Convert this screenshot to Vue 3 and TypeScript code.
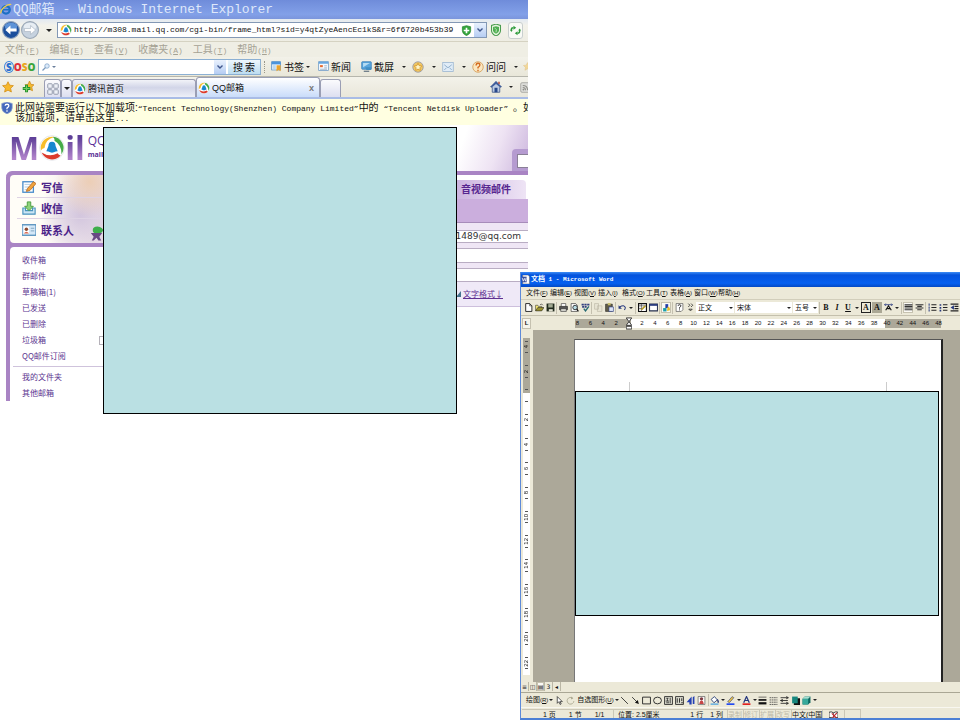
<script setup lang="ts">
import { ref } from 'vue'

interface Entry { label: string; key: string }
interface Tool { icon?: string; text?: string; kind?: 'sep' | 'drop' | 'glyph'; cls?: string; name?: string }

const address = ref('http://m308.mail.qq.com/cgi-bin/frame_html?sid=y4qtZyeAencEc1kS&r=6f6720b453b39')
const query = ref('')
const sender = ref('11489@qq.com')

const browserMenu: Entry[] = [
  { label: '文件', key: 'F' }, { label: '编辑', key: 'E' }, { label: '查看', key: 'V' },
  { label: '收藏夹', key: 'A' }, { label: '工具', key: 'T' }, { label: '帮助', key: 'H' },
]
const wordMenu: Entry[] = [
  { label: '文件', key: 'F' }, { label: '编辑', key: 'E' }, { label: '视图', key: 'V' },
  { label: '插入', key: 'I' }, { label: '格式', key: 'O' }, { label: '工具', key: 'T' },
  { label: '表格', key: 'A' }, { label: '窗口', key: 'W' }, { label: '帮助', key: 'H' },
]
const mainLinks = [
  { icon: 'write', label: '写信' }, { icon: 'inbox', label: '收信' }, { icon: 'card', label: '联系人' },
]
const folders = ['收件箱', '群邮件', '草稿箱(1)', '已发送', '已删除', '垃圾箱', 'QQ邮件订阅']
const extraFolders = ['我的文件夹', '其他邮箱']

const icons: Record<string, string> = {
  ie: '<ellipse cx="8" cy="9" rx="5" ry="5" fill="none" stroke="#1c6fc4" stroke-width="3"/><path d="M4 9h9" stroke="#1c6fc4" stroke-width="2"/><path d="M1 14C0 9 9 1 15 2" fill="none" stroke="#f2cf4a" stroke-width="1.6"/>',
  qq: '<circle cx="8" cy="8" r="7.600" fill="#fff" stroke="#d8dce2" stroke-width=".4"/><path d="M1.200 9.500A7 7 0 0 1 9.500 1.200Q4 2.500 3.400 8Q2 8.300 1.200 9.500Z" fill="#f6bd2a"/><path d="M8.500 1A7 7 0 0 1 13.800 12Q14 6 9.500 3.500Q9.800 2 8.500 1Z" fill="#45ab48"/><path d="M13.300 12.600A7 7 0 0 1 1.600 10.800Q6.500 14 11.500 11.300Q12 12.600 13.300 12.600Z" fill="#dc3b2c"/><path d="M8 4.200q2.200 0 2.200 2.600l1.300 3.200-1.200.2q-2.300 1.400-4.600 0L4.500 10l1.300-3.200Q5.800 4.200 8 4.200Z" fill="#1787cf"/>',
  back: '<circle cx="8" cy="8" r="7.500" fill="#1c4f9c" stroke="#93a5bd"/><ellipse cx="8" cy="5" rx="5.500" ry="3.500" fill="#5d93d8"/><path d="M3 8l4.500-4v2.700H13v2.600H7.500V12Z" fill="#fff"/>',
  forward: '<circle cx="8" cy="8" r="7.500" fill="#c6d2df" stroke="#9aa7b6"/><ellipse cx="8" cy="5" rx="5.500" ry="3.500" fill="#e7edf3"/><path d="M13 8L8.500 4v2.700H3v2.600h5.500V12Z" fill="#fff" stroke="#a7b3c1" stroke-width=".6"/>',
  plusShield: '<path d="M8 1l6 1.500v6Q14 13 8 15.500Q2 13 2 8.500v-6Z" fill="#34a53c" stroke="#23822d"/><path d="M8 4v8M4 8h8" stroke="#fff" stroke-width="2.400"/>',
  shield: '<path d="M8 0l6 2v6.500Q14 13 8 16Q2 13 2 8.500V2Z" fill="#e6f4df" stroke="#4a9c4f" stroke-width="1.400"/><path d="M8 3l4 1v4.500Q12 11 8 13Q4 11 4 8.500V4Z" fill="#4fae52"/><path d="M6 5q4 2 2 6" stroke="#d9f1d4" fill="none"/>',
  refresh: '<path d="M2 8V6q0-2 3-2M11 12q3 0 3-3V7" fill="none" stroke="#2e9b3b" stroke-width="2"/><path d="M5 1l4 3-4 3ZM11 9l-4 3 4 3ZM0 7h4L2 10ZM12 8h4L14 5Z" fill="#2e9b3b"/>',
  star: '<path d="M8 1l2.200 4.600 5 .6-3.700 3.500 1 5L8 12.200 3.500 14.700l1-5L.8 6.200l5-.6Z" fill="#f7b92b" stroke="#d38b12"/>',
  addStar: '<path d="M10 0l2 4.500 4 .5-3 3 1 5-4-2-4 2 1-5-3-3 4-.5Z" fill="#f5b92e" stroke="#cb8a1b"/><path d="M6 5v10M1 10h10" stroke="#23912c" stroke-width="4"/><path d="M6 6v8M2 10h8" stroke="#74cf62" stroke-width="1.600"/>',
  tiles: '<g fill="#edf0f6" stroke="#9198aa" stroke-width="1.300"><rect x="1" y="1" width="6" height="6" rx="1"/><rect x="9" y="1" width="6" height="6" rx="1"/><rect x="1" y="9" width="6" height="6" rx="1"/><rect x="9" y="9" width="6" height="6" rx="1"/></g>',
  bookmark: '<rect x="1" y="1" width="13" height="12" fill="#fff" stroke="#4580bd"/><path d="M1 1h13v4H1Z" fill="#4b94dc"/><path d="M2 6h5v6H2Z" fill="#bdd9f1"/><path d="M8 6h6v9l-3-2-3 2Z" fill="#eba32b"/>',
  news: '<rect x="1" y="1" width="14" height="13" fill="#f5f9fe" stroke="#5d8fbf"/><path d="M1 1h14v3H1Z" fill="#67a7e0"/><path d="M3 6h4v3H3Z" fill="#e5682c"/><path d="M9 7h4M9 10h4M3 12h10" stroke="#8199b1"/>',
  shot: '<rect x="1" y="1" width="14" height="11" rx="1" fill="#58a5dc" stroke="#3279b5"/><path d="M3 3h10L3 9Z" fill="#b5dcf3"/><path d="M6 9h9v4H8Z" fill="#408fc5"/><path d="M4 15h8" stroke="#73818c" stroke-width="2"/>',
  badge: '<circle cx="8" cy="8" r="7" fill="#efc665" stroke="#8f93a8"/><path d="M8 3l1.500 3.200 3.500.4-2.500 2.500.6 3.400L8 10.800 4.900 12.500l.6-3.400L3 6.600l3.500-.4Z" fill="#fff5c7" stroke="#d39320"/>',
  mail: '<rect x="1" y="2" width="14" height="12" fill="#e0ecf7" stroke="#97b3cf"/><path d="M3 5l5 4 5-4M3 12l3-3M13 12l-3-3" fill="none" stroke="#7b9dbf"/>',
  ask: '<circle cx="8" cy="8" r="7" fill="#fae7c0" stroke="#d1954b"/><path d="M5.500 6q0-3 2.500-3t2.500 2.300Q10.500 7 8 8.500V10M8 11.500v2" fill="none" stroke="#d46b21" stroke-width="1.800"/>',
  home: '<path d="M1 8l7-7 7 7-2 .5V15H3V8.500Z" fill="#bccbe3" stroke="#334d80"/><path d="M0 8l8-8 8 8H13L8 4 3 8Z" fill="#405e9c"/><path d="M6 9h4v6H6Z" fill="#28488c"/><path d="M11 1h2v3h-2Z" fill="#b44b3d"/>',
  rss: '<rect x="1" y="1" width="14" height="14" rx="2" fill="#dcdcd8" stroke="#969692"/><path d="M4 5q7 0 7 7M4 8q4 0 4 4" fill="none" stroke="#8e8e89" stroke-width="1.500"/><circle cx="5" cy="11" r="1.300" fill="#8e8e89"/>',
  info: '<path d="M8 0l7 2v6q0 5-7 8Q1 13 1 8V2Z" fill="#4468bb" stroke="#93a5cf"/><path d="M5.500 5q0-2 2.500-2t2.500 2q0 1.500-2.500 3v1.500M8 11v2" fill="none" stroke="#fff" stroke-width="1.700"/>',
  lens: '<circle cx="10" cy="6" r="4.500" fill="#dceaf9" stroke="#7da1c8" stroke-width="1.500"/><path d="M7 9l-6 6" stroke="#7c9abd" stroke-width="2.500"/>',
  chevron: '<path d="M3 5l5 5 5-5" fill="none" stroke="#3f568c" stroke-width="2.800"/>',
  write: '<rect x="1" y="2" width="12" height="12" fill="#fff" stroke="#4b8dcb" stroke-width="1.500"/><path d="M3 5h7M3 8h5M3 11h4" stroke="#a8c7df"/><path d="M6 10l7-8 3 2-7 8-4 1Z" fill="#f1a33a" stroke="#b86d28"/>',
  inbox: '<path d="M1 8v7h14V8h-3v3H4V8Z" fill="#cbe5f4" stroke="#4a93bd" stroke-width="1.300"/><path d="M6 1h4v5h3l-5 5-5-5h3Z" fill="#8ed37b" stroke="#43983a"/>',
  card: '<rect x="0" y="2" width="16" height="12" fill="#d4e8f7" stroke="#4384b5" stroke-width="1.300"/><rect x="2" y="4" width="6" height="8" fill="#fff"/><circle cx="5" cy="7" r="2" fill="#8d4b31"/><path d="M2 12q3-4 6 0Z" fill="#dc6a50"/><path d="M10 6h4M10 9h4" stroke="#799fb9"/>',
  wdoc: '<path d="M3 0h10l2 3v13H3Z" fill="#fff" stroke="#666"/><path d="M1 3h9v10H1Z" fill="#354e9d"/><path d="M2 5l2 6 2-5 2 5 1-6" fill="none" stroke="#fff" stroke-width="1.300"/>',
  newdoc: '<path d="M3 1h7l4 4v10H3Z" fill="#fff" stroke="#111" stroke-width="1.500"/><path d="M10 1v4h4" fill="none" stroke="#111"/>',
  open: '<path d="M1 14V4h4l1 2h6v3" fill="#f6e875" stroke="#333"/><path d="M1 14l4-6h11l-4 6Z" fill="#9b9330" stroke="#222"/><path d="M9 3q3-3 5 1" fill="none" stroke="#111"/>',
  save: '<path d="M1 1h14v14H1Z" fill="#202a1c"/><path d="M4 2h8v6H4Z" fill="#a2aa92"/><path d="M5 11h7v4H5Z" fill="#e0e0d0"/>',
  print: '<path d="M4 6V1h8v5" fill="#fff" stroke="#222"/><path d="M1 6h14v6H1Z" fill="#555" stroke="#111"/><path d="M3 10h10v5H3Z" fill="#d5d5ce" stroke="#222"/>',
  preview: '<path d="M2 1h8l3 3v11H2Z" fill="#fff" stroke="#111"/><circle cx="9" cy="8" r="4" fill="#b8dbe4" stroke="#222" stroke-width="1.500"/><path d="M12 11l3 4" stroke="#111" stroke-width="2"/>',
  spell: '<path d="M1 3h14M2 7h8" stroke="#334080" stroke-width="3" stroke-dasharray="4 1"/><path d="M5 10l3 4 6-8" fill="none" stroke="#276a72" stroke-width="2.500"/>',
  copy: '<path d="M1 1h7v10H1ZM6 5h8v10H6Z" fill="#e8e5d5" stroke="#b5b19e"/>',
  paste: '<path d="M1 2h12v13H1Z" fill="#605b48" stroke="#222"/><path d="M5 0h5v4H5Z" fill="#c7bd6d"/><path d="M7 7h8v8H7Z" fill="#dce4f5" stroke="#20337e"/>',
  undo: '<path d="M3 7q8-5 10 1 0 3-2 4" fill="none" stroke="#26387e" stroke-width="1.800"/><path d="M1 4v6h6Z" fill="#26387e"/>',
  table: '<path d="M1 1h14v14H1Z" fill="#fff" stroke="#111" stroke-width="2"/><path d="M1 5h14M1 10h8M6 1v14" stroke="#222"/><path d="M6 12L13 5" stroke="#b59a25" stroke-width="3"/>',
  pane: '<path d="M1 2h14v12H1Z" fill="#fff" stroke="#26304f" stroke-width="1.800"/><path d="M1 2h14v3H1Z" fill="#26387e"/>',
  draw: '<path d="M2 9h6v6H2Z" fill="#1b9eaa"/><path d="M6 2h5v7H6Z" fill="#213da9"/><path d="M10 6q5 1 4 7l-5 1Z" fill="#e6bd25"/>',
  help: '<path d="M2 1h12v11l-3 3H2Z" fill="#fff" stroke="#333"/><path d="M5.500 5q0-2 2.500-2t2.500 2q0 1.500-2.500 3v2M8 11.500v1.500" fill="none" stroke="#111" stroke-width="1.500"/>',
  more: '<path d="M4 1l3 3-3 3M9 1l3 3-3 3M5 11h6l-3 3Z" fill="none" stroke="#222" stroke-width="1.400"/>',
  expand: '<path d="M3 13L8 5l5 8M6 10h5" fill="none" stroke="#111" stroke-width="2"/><path d="M1 3h14M3 1L1 3l2 2M13 1l2 2-2 2" fill="none" stroke="#26387e" stroke-width="1.500"/>',
  justify: '<path d="M1 3h14M1 6h14M1 9h14M1 12h14" stroke="#333" stroke-width="1.800"/>',
  center: '<path d="M1 3h14M4 6h8M1 9h14M4 12h8" stroke="#333" stroke-width="1.800"/>',
  numbers: '<path d="M6 3h9M6 8h9M6 13h9" stroke="#222" stroke-width="1.800"/><path d="M2 1v4M2 6v4M2 11v4" stroke="#26387e" stroke-width="1.800"/>',
  bullets: '<path d="M7 3h8M7 8h8M7 13h8" stroke="#222" stroke-width="1.800"/><path d="M1 2h3v3H1ZM1 7h3v3H1ZM1 12h3v3H1Z" fill="#26387e"/>',
  outdent: '<path d="M1 2h14M8 6h7M8 10h7M1 14h14" stroke="#222" stroke-width="1.800"/><path d="M7 4L1 8l6 4Z" fill="#26387e"/>',
  pointer: '<path d="M4 1v12l3-3 2 5 2-1-2-4h4Z" fill="#fff" stroke="#222" stroke-width="1.300"/>',
  rotate: '<path d="M12 4A6 6 0 1 0 14 9" fill="none" stroke="#aaa78f" stroke-width="1.500"/><path d="M9 1l4 3-4 2Z" fill="#aaa78f"/>',
  line: '<path d="M2 2l12 12" stroke="#222" stroke-width="1.500"/>',
  arrow: '<path d="M2 2l9 9" stroke="#222" stroke-width="1.500"/><path d="M14 14l-2-7-5 5Z" fill="#111"/>',
  rect: '<path d="M1 2h14v12H1Z" fill="none" stroke="#222" stroke-width="1.600"/>',
  oval: '<ellipse cx="8" cy="8" rx="7" ry="6" fill="none" stroke="#222" stroke-width="1.600"/>',
  textbox: '<path d="M1 1h14v14H1Z" fill="#dcdccf" stroke="#222" stroke-width="1.500"/><path d="M4 4h4M6 4v5M3 9h6M11 3v10M4 12h5" stroke="#222" stroke-width="1.400"/>',
  textcol: '<path d="M1 1h14v14H1Z" fill="#dcdccf" stroke="#222" stroke-width="1.500"/><path d="M4 4v8M8 4v8M12 4v5M11 12h3" stroke="#222" stroke-width="1.600"/>',
  art: '<path d="M1 11L10 1v14H6v-4ZM12 2l3-2v14h-3Z" fill="#2541b4"/>',
  clip: '<path d="M2 1h12v14H2Z" fill="#fff" stroke="#333"/><circle cx="8" cy="5" r="3" fill="#813b42"/><path d="M4 14q1-6 4-6t4 6Z" fill="#c64545"/>',
  fill: '<path d="M2 6l6-5 5 6-6 5Z" fill="#fff" stroke="#233b70" stroke-width="1.500"/><path d="M13 6q3 4 1 6" stroke="#26387e" stroke-width="2"/><path d="M1 13h14v3H1Z" fill="#73b5df"/>',
  pen: '<path d="M3 10L11 1l3 2-8 9Z" fill="#e8c245" stroke="#26387e"/><path d="M1 13h14v3H1Z" fill="#234bf0"/>',
  fontcolor: '<path d="M3 12L8 1l5 11M5 8h6" fill="none" stroke="#26387e" stroke-width="2.200"/><path d="M1 13h14v3H1Z" fill="#e12320"/>',
  weight: '<path d="M1 2h14" stroke="#111"/><path d="M1 7h14" stroke="#111" stroke-width="3"/><path d="M1 13h14" stroke="#111" stroke-width="4"/>',
  dash: '<path d="M1 3h14M1 7h14M1 11h14M1 15h14" stroke="#333" stroke-width="1.300" stroke-dasharray="3 1"/>',
  arrows: '<path d="M1 3h13M1 8h13M1 13h13M11 1l4 2-4 2M5 6L1 8l4 2M11 11l4 2-4 2" fill="none" stroke="#222" stroke-width="1.500"/>',
  shadow: '<path d="M5 4h11v12H5Z" fill="#111"/><path d="M2 1h10v12H2Z" fill="#17877e"/>',
  cube: '<path d="M1 5l4-4h10v10l-4 4H1Z" fill="#0d655f"/><path d="M1 5h10v10H1Z" fill="#36a99b"/><path d="M1 5l4-4h10l-4 4Z" fill="#a8e1d2"/>',
  book: '<path d="M0 4q4-2 8 1 4-3 8-1v10q-4-2-8 1-4-3-8-1Z" fill="#fff" stroke="#222" stroke-width="1.500"/><path d="M8 5v10" stroke="#222"/><path d="M5 6l9 9M14 5L6 14" stroke="#c1272d" stroke-width="2"/>',
}

const sep: Tool = { kind: 'sep' }
const drop: Tool = { kind: 'drop' }
const fileTools: Tool[] = [
  { icon: 'newdoc' }, { icon: 'open' }, { icon: 'save' }, sep, { icon: 'print' }, { icon: 'preview' }, { icon: 'spell' }, sep,
  { icon: 'copy' }, { icon: 'paste' }, sep, { icon: 'undo' }, drop, sep, { icon: 'table' }, { icon: 'pane' }, sep,
  { icon: 'draw', cls: 'pressed' }, sep, { icon: 'help' }, { icon: 'more' },
]
const formatTools: Tool[] = [
  sep, { kind: 'glyph', text: 'B', cls: 'bold' }, { kind: 'glyph', text: 'I', cls: 'italic' }, { kind: 'glyph', text: 'U', cls: 'under' }, drop,
  { kind: 'glyph', text: 'A', cls: 'boxed' }, { kind: 'glyph', text: 'A', cls: 'shaded' }, { icon: 'expand' }, drop, sep,
  { icon: 'justify', cls: 'pressed' }, { icon: 'center' }, sep, { icon: 'numbers' }, { icon: 'bullets' }, { icon: 'outdent' }, { icon: 'outdent' },
]
const drawTools: Tool[] = [
  { icon: 'line' }, { icon: 'arrow' }, { icon: 'rect' }, { icon: 'oval' }, { icon: 'textbox' }, { icon: 'textcol' }, { icon: 'art' }, { icon: 'clip' }, sep,
  { icon: 'fill' }, drop, { icon: 'pen' }, drop, { icon: 'fontcolor' }, drop,
  { icon: 'weight' }, { icon: 'dash' }, { icon: 'arrows' }, { icon: 'shadow' }, { icon: 'cube' }, drop,
]
const combos = [
  { name: '样式', value: '正文', cls: 'style-box' }, { name: '字体', value: '宋体', cls: 'font-box' }, { name: '字号', value: '五号', cls: 'size-box' },
]
const across: string[] = ['8', '6', '4', '2', '', ...Array.from({ length: 24 }, (_, i) => String((i + 1) * 2))]
const down: string[] = ['4', '2', '', ...Array.from({ length: 11 }, (_, i) => String((i + 1) * 2))]
const modes = ['录制', '修订', '扩展', '改写']
</script>

<template>
  <main class="desktop">
    <section class="browser">
      <header class="ie-title">
        <svg class="i12" viewBox="0 0 16 16" v-html="icons.ie" />
        <h1>QQ<span class="cjk">邮箱</span> - Windows Internet Explorer</h1>
      </header>

      <div class="address-row">
        <button class="nav" aria-label="后退"><svg class="i18" viewBox="0 0 16 16" v-html="icons.back" /></button>
        <button class="nav" aria-label="前进"><svg class="i18" viewBox="0 0 16 16" v-html="icons.forward" /></button>
        <button class="recent" aria-label="最近网页"><i class="tri" /></button>
        <div class="address">
          <svg class="i12" viewBox="0 0 16 16" v-html="icons.qq" />
          <input v-model="address" aria-label="地址" />
          <svg class="i10" viewBox="0 0 16 16" v-html="icons.plusShield" />
          <button class="arrow-btn" aria-label="展开"><svg class="i8" viewBox="0 0 16 16" v-html="icons.chevron" /></button>
        </div>
        <svg class="i12 guard" viewBox="0 0 16 16" v-html="icons.shield" />
        <button class="go" aria-label="刷新"><svg class="i10" viewBox="0 0 16 16" v-html="icons.refresh" /></button>
      </div>

      <nav class="ie-menu">
        <button v-for="m in browserMenu" :key="m.key">{{ m.label }}<small>(<u>{{ m.key }}</u>)</small></button>
      </nav>

      <div class="soso-row">
        <span class="soso"><b class="s1">S</b><b class="s2">O</b><b class="s3">S</b><b class="s4">O</b></span>
        <div class="search">
          <svg class="i8" viewBox="0 0 16 16" v-html="icons.lens" /><i class="tri pale" />
          <input v-model="query" aria-label="搜索内容" />
          <button class="arrow-btn" aria-label="历史"><svg class="i8" viewBox="0 0 16 16" v-html="icons.chevron" /></button>
          <button class="search-btn">搜 索</button>
        </div>
        <i class="dots" />
        <button class="tool w47"><svg class="i10" viewBox="0 0 16 16" v-html="icons.bookmark" />书签<i class="tri" /></button>
        <button class="tool w43"><svg class="i10" viewBox="0 0 16 16" v-html="icons.news" />新闻</button>
        <button class="tool w51"><svg class="i10" viewBox="0 0 16 16" v-html="icons.shot" />截屏<i class="tri far" /></button>
        <button class="tool w30" aria-label="收藏"><svg class="i12" viewBox="0 0 16 16" v-html="icons.badge" /><i class="tri far" /></button>
        <button class="tool w30" aria-label="邮件"><svg class="i12" viewBox="0 0 16 16" v-html="icons.mail" /><i class="tri far" /></button>
        <button class="tool w51"><svg class="i12" viewBox="0 0 16 16" v-html="icons.ask" />问问<i class="tri far" /></button>
        <svg class="i10 faint" viewBox="0 0 9 16" v-html="icons.star" />
      </div>

      <div class="tab-row">
        <button class="fav" aria-label="收藏中心"><svg class="i12" viewBox="0 0 16 16" v-html="icons.star" /></button>
        <button class="fav" aria-label="添加收藏"><svg class="i12" viewBox="0 0 16 16" v-html="icons.addStar" /></button>
        <button class="tab quick" aria-label="快速导航"><svg class="i12" viewBox="0 0 16 16" v-html="icons.tiles" /></button>
        <button class="tab list" aria-label="选项卡列表"><i class="tri" /></button>
        <button class="tab page-tab"><svg class="i12" viewBox="0 0 16 16" v-html="icons.qq" />腾讯首页</button>
        <button class="tab page-tab current"><svg class="i12" viewBox="0 0 16 16" v-html="icons.qq" />QQ邮箱<span class="close">x</span></button>
        <button class="tab blank" aria-label="新选项卡"></button>
        <div class="page-tools">
          <svg class="i12" viewBox="0 0 16 16" v-html="icons.home" /><i class="tri" /><svg class="i10" viewBox="0 0 16 16" v-html="icons.rss" />
        </div>
      </div>

      <div class="info-bar">
        <svg class="i12" viewBox="0 0 16 16" v-html="icons.info" />
        <p>此网站需要运行以下加载项:<small>“Tencent Technology(Shenzhen) Company Limited”</small>中的<small> “Tencent Netdisk Uploader” </small>。如<br />该加载项，请单击这里<small>...</small></p>
      </div>

      <div class="mail-head">
        <div class="logo"><span>M</span><svg class="i26" viewBox="0 0 16 16" v-html="icons.qq" /><span>il</span></div>
        <div class="brand"><span>QQ</span><b>mail.</b></div>
        <div class="corner"><i /></div>
      </div>

      <div class="mail-body">
        <aside>
          <nav class="primary">
            <a v-for="l in mainLinks" :key="l.label" href="#"><svg class="i14" viewBox="0 0 16 16" v-html="icons[l.icon]" />{{ l.label }}</a>
            <svg class="plant" viewBox="0 0 16 16"><path d="M4 5q0-4 5-4 6 1 6 4-1 4-6 3-5 1-5-3Z" fill="#3fae4c" /><path d="M2 8h12l-3 4 2 4h-3l-2-3-3 3H3l2-4Z" fill="#684884" /></svg>
          </nav>
          <nav class="folders">
            <a v-for="f in folders" :key="f" href="#">{{ f }}<i v-if="f === '垃圾箱'" class="clear" /></a>
            <hr />
            <a v-for="f in extraFolders" :key="f" href="#">{{ f }}</a>
          </nav>
        </aside>
        <section class="compose">
          <div class="compose-tabs"><a href="#">音视频邮件</a></div>
          <div class="band"></div>
          <div class="field"><input v-model="sender" aria-label="发件人" /></div>
          <div class="field second"></div>
          <div class="field third"></div>
          <div class="format-row"><i /><a href="#">文字格式↓</a></div>
        </section>
      </div>
    </section>

    <section class="word">
      <header class="word-title">
        <svg class="i9" viewBox="0 0 16 16" v-html="icons.wdoc" />
        <h2><span class="cjk">文档</span> 1 - Microsoft Word</h2>
      </header>
      <nav class="word-menu">
        <button v-for="m in wordMenu" :key="m.key">{{ m.label }}<small>(<u>{{ m.key }}</u>)</small></button>
      </nav>
      <div class="tools">
        <template v-for="(t, n) in fileTools" :key="n">
          <i v-if="t.kind === 'sep'" class="sep" />
          <i v-else-if="t.kind === 'drop'" class="tri" />
          <button v-else :class="['tb', t.cls]" :aria-label="t.icon"><svg viewBox="0 0 16 16" v-html="icons[t.icon ?? '']" /></button>
        </template>
        <label v-for="c in combos" :key="c.name" :class="['combo', c.cls]">
          <select :aria-label="c.name"><option>{{ c.value }}</option></select><i class="tri" />
        </label>
        <template v-for="(t, n) in formatTools" :key="n">
          <i v-if="t.kind === 'sep'" class="sep" />
          <i v-else-if="t.kind === 'drop'" class="tri" />
          <button v-else-if="t.kind === 'glyph'" :class="['tb', 'glyph', t.cls]">{{ t.text }}</button>
          <button v-else :class="['tb', t.cls]" :aria-label="t.icon"><svg viewBox="0 0 16 16" v-html="icons[t.icon ?? '']" /></button>
        </template>
      </div>
      <div class="ruler-row">
        <span class="stop">L</span>
        <div class="ruler">
          <span v-for="(n, k) in across" :key="k">
            <svg v-if="n === ''" class="marker" viewBox="0 0 6 14"><path d="M0 1h6L3 5Z M3 5L6 9H0Z M0 10h6v3H0Z" fill="#fff" stroke="#333" /></svg>
            <template v-else>{{ n }}</template>
          </span>
        </div>
      </div>
      <div class="workspace">
        <div class="side-ruler"><span v-for="(n, k) in down" :key="k"><b>{{ n }}</b></span></div>
        <div class="canvas">
          <article class="sheet"><div class="margins" /></article>
        </div>
      </div>
      <div class="views">
        <button>≡</button><button>◫</button><button class="pressed">▤</button><button>3</button><button>◂</button>
      </div>
      <div class="tools drawing">
        <button class="label-btn">绘图<small>(<u>R</u>)</small></button><i class="tri" />
        <button class="tb" aria-label="选择"><svg viewBox="0 0 16 16" v-html="icons.pointer" /></button>
        <button class="tb" aria-label="旋转"><svg viewBox="0 0 16 16" v-html="icons.rotate" /></button>
        <button class="label-btn">自选图形<small>(<u>U</u>)</small></button><i class="tri" />
        <template v-for="(t, n) in drawTools" :key="n">
          <i v-if="t.kind === 'sep'" class="sep" />
          <i v-else-if="t.kind === 'drop'" class="tri" />
          <button v-else class="tb" :aria-label="t.icon"><svg viewBox="0 0 16 16" v-html="icons[t.icon ?? '']" /></button>
        </template>
      </div>
      <footer class="status">
        <div class="cell place"><span>1 页</span><span>1 节</span><span>1/1</span></div>
        <div class="cell spot"><span>位置: 2.5厘米</span><span class="end">1 行</span><span>1 列</span></div>
        <span v-for="m in modes" :key="m" class="cell mode">{{ m }}</span>
        <span class="cell lang">中文(中国</span>
        <span class="cell proof"><svg class="i9" viewBox="0 0 16 16" v-html="icons.book" /></span>
        <span class="cell empty" />
      </footer>
    </section>

    <div class="cover first" />
    <div class="cover second-cover" />
  </main>
</template>

<style>
body { margin: 0; background: #fff; }
</style>

<style scoped>
* { box-sizing: border-box; }
.desktop { position: relative; min-height: 720px; overflow: hidden; font-family: "Liberation Sans", "Noto Sans CJK SC", sans-serif; color: #111; }
button { border: 0; padding: 0; background: none; font: inherit; color: inherit; white-space: nowrap; }
input, select { border: 0; padding: 0; outline: 0; background: none; font: inherit; color: inherit; min-width: 0; }
a { color: inherit; text-decoration: none; }
svg { display: block; flex: none; }
small { font-family: "Liberation Mono", "Noto Sans CJK SC", monospace; font-size: 8px; }
.i8 { width: 8px; height: 8px; }
.i9 { width: 9px; height: 9px; }
.i10 { width: 11px; height: 11px; }
.i12 { width: 12px; height: 12px; }
.i14 { width: 14px; height: 14px; }
.i18 { width: 18px; height: 18px; }
.i26 { width: 26px; height: 26px; }
.tri { flex: none; width: 0; height: 0; border: 2px solid transparent; border-top-color: #222; border-bottom: 0; }
.tri.pale { border-top-color: #6a7f9c; }

.browser { position: absolute; left: 0; top: 0; width: 55%; height: 401px; overflow: hidden; display: flex; flex-direction: column; background: #fff; }
.browser > * { flex: none; }
.ie-title { display: flex; align-items: center; height: 19px; gap: 1px; padding-bottom: 1px; background: linear-gradient(#6f8cda, #82a0e8 75%, #7b95dc); color: #dfe8fa; }
h1 { margin: 0; font: 13px/17px "Liberation Mono", "Noto Sans CJK SC", monospace; white-space: pre; }
.address-row { display: flex; align-items: center; height: 23px; padding: 0 2px; background: linear-gradient(#e2e9f2, #f3f2ea 30%, #eeede3); border-bottom: 1px solid #d5d2c2; }
.nav { margin-right: 1px; }
.recent { width: 17px; display: flex; justify-content: center; }
.recent .tri, .tab .tri { border-width: 3px; border-bottom-width: 0; }
.address { flex: 1; display: flex; align-items: center; height: 16px; gap: 2px; margin-right: 1px; padding-left: 2px; background: #fff; border: 1px solid #8398b5; }
.address input { flex: 1; font: 8px/14px "Liberation Mono", monospace; }
.arrow-btn { display: grid; place-items: center; width: 12px; height: 14px; background: linear-gradient(#e9f1fd, #b6cdf3); }
.guard { margin: 0 6px 0 2px; }
.go { display: grid; place-items: center; width: 15px; height: 17px; margin-right: 3px; border: 1px solid #c9cfcf; border-radius: 3px; background: #f9faf6; }

.ie-menu { display: flex; align-items: center; gap: 10px; height: 15px; padding: 1px 5px 0; background: #efeee4; color: #a5a294; font: 10px/14px "Noto Sans CJK SC", sans-serif; }
.soso-row { display: flex; align-items: center; height: 20px; background: linear-gradient(#f2f1e9, #e9e7d9); border-bottom: 1px solid #b6b6ac; font: 10px/14px "Noto Sans CJK SC", sans-serif; }
.soso { width: 34px; margin-left: 4px; display: flex; align-items: center; font: bold 10px/14px "Open Sans", sans-serif; }
.s1 { color: #2a6fd0; border: 1px solid #3e86dc; border-radius: 50%; line-height: 10px; padding: 0 1px; }
.s2 { color: #de2f3b; } .s3 { color: #e8a51d; } .s4 { color: #3aa53c; }
.search { flex: 1; display: flex; align-items: center; height: 16px; padding-left: 3px; gap: 2px; background: #fff; border: 1px solid #8cb0d3; }
.search input { flex: 1; }
.search-btn { height: 14px; width: 32px; background: linear-gradient(#eef7fd, #bcdcf0); line-height: 14px; }
.dots { width: 2px; height: 12px; margin: 0 5px 0 3px; border-left: 1px dotted #99978a; }
.tool { display: flex; align-items: center; gap: 2px; }
.tool .far { margin-left: 6px; }
.w47 { width: 47px; } .w43 { width: 43px; } .w51 { width: 51px; } .w30 { width: 30px; }
.faint { width: 5px; opacity: .4; }

.tab-row { display: flex; align-items: flex-end; height: 22px; padding-left: 2px; background: linear-gradient(#f3f2ea, #e9e7da); border-bottom: 2px solid #a9bce6; font: 9px/16px "Liberation Sans", "Noto Sans CJK SC", sans-serif; }
.fav { align-self: center; width: 20px; }
.tab { display: flex; align-items: center; height: 18px; border: 1px solid #9a9eb4; border-bottom: 0; border-radius: 3px 3px 0 0; background: linear-gradient(#fbfbfd, #dddff0); }
.quick { justify-content: center; width: 17px; margin-left: 2px; }
.list { justify-content: center; width: 11px; }
.page-tab { flex: 1; max-width: 124px; padding: 0 5px 0 1px; gap: 2px; background: linear-gradient(#f2f3f8, #d2d5e8 45%, #eef0f8); }
.current { height: 20px; background: linear-gradient(#fff, #c9dcfa); }
.close { margin-left: auto; color: #777; font-weight: bold; }
.blank { width: 21px; }
.page-tools { align-self: center; flex: none; display: flex; align-items: center; gap: 7px; margin-left: auto; }
.page-tools svg:last-child { margin-right: -3px; }

.info-bar { display: flex; gap: 2px; height: 26px; padding: 3px 0 0 1px; overflow: hidden; background: #ffffe1; }
.info-bar p { flex: none; margin: 0; padding-top: 1px; white-space: pre; font: 10px/9px "Liberation Sans", "Noto Sans CJK SC", sans-serif; }

.mail-head { display: flex; height: 46px; padding: 6px 0 0 9px; background: linear-gradient(110deg, transparent 86%, #eee3f3 93%, #cbb5dd 100%); }
.logo { display: flex; align-items: center; height: 34px; font: bold 32px/34px "Open Sans", sans-serif; }
.logo span { background: linear-gradient(#5e3f98 20%, #b083ca 80%); background-clip: text; color: transparent; }
.brand { display: flex; flex-direction: column; gap: 1px; margin-left: 3px; padding-top: 1px; color: #5a3096; font: 12px/17px "Open Sans", sans-serif; }
.brand b { font-size: 7px; line-height: 10px; }
.corner { align-self: flex-end; margin-left: auto; width: 16px; height: 22px; padding: 5px 0 0 5px; background: #b59bd0; border-radius: 4px 0 0 0; }
.corner i { display: block; height: 14px; background: #fff; border: 1px solid #8a8097; border-right: 0; }

.mail-body { display: flex; height: 230px; margin-left: 6px; padding-left: 4px; background: #a984c4; border-top: 4px solid #a984c4; border-radius: 6px 0 0 0; }
aside { flex: none; width: 94px; display: flex; flex-direction: column; gap: 4px; }
.primary { position: relative; height: 69px; padding: 2px 0 0 7px; border-radius: 4px 0 0 4px; background: radial-gradient(circle at 85% 10%, #ecceb6 0, transparent 35%), radial-gradient(circle at 75% 60%, #d3c6de 0, transparent 50%), linear-gradient(90deg, #fffdf7 35%, #e8dbe5); }
.primary a { display: flex; align-items: center; gap: 5px; height: 21px; padding-left: 5px; border-bottom: 1px solid #ded3e4; color: #4b2389; font: bold 11px/20px "Noto Sans CJK SC", sans-serif; }
.primary a:nth-of-type(3) { border: 0; }
.plant { position: absolute; right: 0; bottom: 2px; width: 15px; height: 16px; }
.folders { flex: 1; padding: 5px 0 0 3px; background: #fff; border-radius: 4px 0 0 0; color: #5b348f; }
.folders a { display: flex; align-items: center; justify-content: space-between; height: 16px; padding-left: 9px; font: 8px/16px "Noto Sans CJK SC", sans-serif; }
.folders hr { margin: 2px 0; border: 0; border-top: 1px solid #cfc3dc; }
.clear { width: 5px; height: 9px; border: 1px solid #b5b1b9; border-right: 0; }
.compose { flex: 1; min-width: 0; background: #fff; }
.compose-tabs { display: flex; justify-content: flex-end; height: 24px; padding: 5px 2px 0 0; }
.compose-tabs a { width: 72px; padding-left: 7px; border-radius: 0 4px 0 0; background: linear-gradient(90deg, #cbb3df, #eee4f5); color: #56268f; font: bold 10px/18px "Noto Sans CJK SC", sans-serif; }
.band { height: 24px; background: #cbaedd; border-bottom: 1px solid #a78cba; }
.field { display: flex; height: 25px; background: #fff; border-top: 7px solid #efe6f5; border-bottom: 5px solid #efe6f5; box-shadow: inset 0 1px #b9adc3, inset 0 -1px #b9adc3; }
.field input { width: 100%; padding-right: 7px; text-align: right; font: 9px/13px "DejaVu Sans", sans-serif; color: #333; }
.second { height: 20px; border-top: 0; }
.third { height: 14px; border: 0; }
.format-row { display: flex; align-items: center; justify-content: flex-end; gap: 2px; height: 25px; padding-right: 26px; background: #efe9f7; border-bottom: 1px solid #cdbfdc; color: #603091; font: 8px/20px "Noto Sans CJK SC", sans-serif; }
.format-row a { width: 39px; text-decoration: underline; white-space: nowrap; }
.format-row i { border-left: 5px solid transparent; border-bottom: 6px solid #46728d; }

.word { position: absolute; left: 520px; right: 0; top: 272px; height: 448px; display: flex; flex-direction: column; background: #ece9d8; border-left: 1px solid #5e8ad8; border-bottom: 2px solid #4c80d5; overflow: hidden; font: 7px/10px "Liberation Sans", "Noto Sans CJK SC", sans-serif; }
.word > * { flex: none; }
.word small { font: 6px/8px "Liberation Sans", sans-serif; }
.word-title { display: flex; align-items: center; gap: 1px; height: 15px; background: linear-gradient(#3d8df5, #0453dd 20%, #0560f0 75%, #0349c4); color: #fff; }
h2 { margin: 0; white-space: pre; font: bold 6px/14px "Liberation Mono", "Noto Sans CJK SC", monospace; }
h2 .cjk { font-size: 7px; }
.word-menu { display: flex; height: 13px; padding-left: 5px; border-bottom: 1px solid #d2cebb; }
.word-menu button { width: 24px; text-align: left; }
.tools { display: flex; align-items: center; gap: 1px; height: 16px; padding-left: 2px; border-bottom: 1px solid #c4c0ad; overflow: hidden; }
.tb { flex: none; width: 10px; height: 11px; display: grid; place-items: center; }
.tb svg { width: 9px; height: 9px; }
.pressed { background: #fbfaf5; box-shadow: inset 0 0 0 1px #c6c2b0; }
.sep { flex: none; width: 1px; height: 12px; background: #c4c0af; }
.word .tri { margin: 0 1px; border-width: 2px 2px 0; }
.word .drawing .tri { margin: 0; }
.combo { flex: none; display: flex; align-items: center; height: 11px; background: #fff; }
.combo select { flex: 1; appearance: none; height: 11px; padding-left: 2px; font: 7px/11px "Noto Sans CJK SC", sans-serif; }
.style-box { width: 38px; } .font-box { width: 57px; } .size-box { width: 25px; }
.glyph { font: bold 8px/10px "Liberation Serif", serif; }
.italic { font-style: italic; } .under { text-decoration: underline; }
.boxed { box-shadow: inset 0 0 0 1px #222; } .shaded { background: #aaa795; }

.ruler-row { display: flex; align-items: center; height: 14px; }
.stop { width: 9px; height: 11px; margin-left: 1px; border: 1px solid #c5c1b0; background: #f6f4eb; text-align: center; font: bold 6px/9px "Liberation Sans", sans-serif; }
.ruler { flex: 1; display: grid; grid-template-columns: repeat(29, 1fr); margin: 0 15px 0 40px; height: 9px; background: linear-gradient(90deg, transparent 1%, #aca899 1% 16%, #fff 16% 84%, #aca899 84% 99%, transparent 99%); font: 6px/9px "Liberation Sans", sans-serif; text-align: center; }
.marker { width: 6px; height: 13px; margin: -2px auto 0; }
.workspace { display: flex; height: 352px; }
.side-ruler { display: grid; grid-template-rows: repeat(14, 1fr); width: 7px; margin: 5px 3px 7px 2px; background: linear-gradient(transparent 1%, #aca899 1% 17%, #fff 17%); }
.side-ruler span { display: grid; place-items: center; background: linear-gradient(#555, #555) 50% 25% / 3px 1px no-repeat, linear-gradient(#555, #555) 50% 75% / 3px 1px no-repeat; }
.side-ruler b { writing-mode: vertical-rl; transform: rotate(180deg); font: 6px/7px "Liberation Sans", sans-serif; }
.canvas { flex: 1; display: flex; padding: 9px 17px 0 41px; background: #aca899; }
.sheet { flex: 1; padding: 42px 54px 0; background: #fff; border-top: 1px solid #555; border-left: 1px solid #777; border-right: 2px solid #222; }
.margins { height: 9px; border: 1px solid #ccc; border-width: 0 1px; }
.views { display: flex; height: 11px; border-bottom: 1px solid #aaa795; }
.views button { width: 8px; height: 9px; border-right: 1px solid #bbb7a5; font: 6px/8px "DejaVu Sans", sans-serif; }
.drawing { height: 15px; padding-left: 4px; border-bottom-color: #f8f7f0; }
.label-btn { padding-left: 1px; }
.status { display: flex; align-items: center; height: 10px; margin-left: 1px; }
.cell { height: 9px; border: 1px solid #cbc7b6; border-width: 1px 1px 0 0; line-height: 9px; white-space: nowrap; }
.place { display: flex; gap: 13px; width: 92px; padding-left: 21px; }
.spot { display: flex; gap: 7px; width: 114px; padding: 0 4px; }
.end { margin-left: auto; }
.mode { width: 16px; color: #bdb9a8; }
.lang { width: 31px; }
.proof { width: 22px; display: grid; place-items: center; }
.empty { width: 16px; }

.cover { position: absolute; background: #bae0e3; border: 1px solid #000; }
.first { left: 103px; top: 127px; width: 354px; height: 287px; }
.second-cover { left: 575px; top: 391px; width: 364px; height: 225px; }
</style>
